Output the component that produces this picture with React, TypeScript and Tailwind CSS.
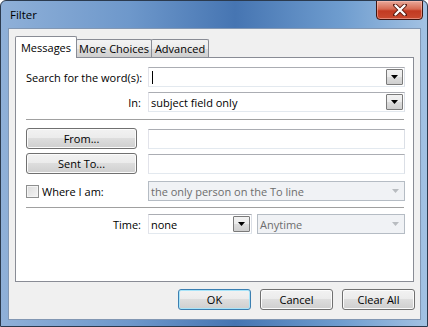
import React from "react";

const FONT = { fontFamily: '"Open Sans", "Noto Sans", sans-serif' };

function Arrow({ disabled }: { disabled?: boolean }) {
  if (disabled) {
    return (
      <div className="w-[17px] self-stretch flex items-center justify-center">
        <svg width="7" height="4" viewBox="0 0 7 4">
          <path d="M0 0 H7 L3.5 4 Z" fill="#b8bcc0" />
        </svg>
      </div>
    );
  }
  return (
    <div className="w-[17px] self-stretch my-[1px] mr-[1px] border border-[#7a7a7a] rounded-[1px] bg-[linear-gradient(180deg,#f2f2f2_0%,#ebebeb_50%,#dddddd_50%,#cfcfcf_100%)] flex items-center justify-center">
      <svg width="7" height="4" viewBox="0 0 7 4">
        <path d="M0 0 H7 L3.5 4 Z" fill="#000" />
      </svg>
    </div>
  );
}

function Combo({
  text,
  disabled,
  caret,
  className = "",
}: {
  text?: string;
  disabled?: boolean;
  caret?: boolean;
  className?: string;
}) {
  return (
    <div
      className={
        "h-[20px] flex items-stretch border " +
        (disabled ? "bg-[#f0f2f5] border-[#b5bcc4] text-[#6d6d6d] " : "bg-white border-[#abadb3] border-b-[#e3e9ef] border-l-[#e2e3ea] border-r-[#dbdfe6] text-black ") +
        className
      }
    >
      <div className="flex-1 flex items-center pl-[2px] text-[11px] leading-none whitespace-nowrap overflow-hidden">
        {caret ? <div className="w-px h-[13px] bg-black ml-[1px]" /> : text}
      </div>
      <Arrow disabled={disabled} />
    </div>
  );
}

function TextBox() {
  return <div className="h-[20px] flex-1 bg-white border border-[#abadb3] border-b-[#e3e9ef] border-l-[#e2e3ea] border-r-[#dbdfe6]" />;
}

function WinButton({ children, def, className = "" }: { children: React.ReactNode; def?: boolean; className?: string }) {
  return (
    <div
      className={
        "h-[21px] rounded-[3px] border flex items-center justify-center text-[11px] text-black leading-none bg-[linear-gradient(180deg,#f2f2f2_0%,#ebebeb_50%,#dddddd_50%,#cfcfcf_100%)] " +
        (def ? "border-[#3c7fb1] shadow-[inset_0_0_0_1px_#a8e4f9] " : "border-[#707070] shadow-[inset_0_0_0_1px_#fbfbfb] ") +
        className
      }
    >
      {children}
    </div>
  );
}

function Label({ children }: { children: React.ReactNode }) {
  return <div className="w-[115px] text-right text-[11px] text-black leading-none whitespace-nowrap">{children}</div>;
}

export default function App() {
  return (
    <div
      className="w-[428px] h-[327px] relative overflow-hidden flex flex-col rounded-t-[6px] border border-[#2b3a4e] bg-[linear-gradient(90deg,#8fb0d8_0%,#6e98cb_30%,#4675b2_55%,#6f9dcf_80%,#a3c2e3_100%)]"
      style={FONT}
    >
      {/* title bar */}
      <div className="h-[27px] flex items-center pl-[9px] shrink-0">
        <span className="text-[11.5px] text-black leading-none">Filter</span>
      </div>
      {/* close button */}
      <div className="absolute top-[-1px] right-[4px] w-[47px] h-[20px] rounded-b-[4px] border border-[#3f1510] bg-[linear-gradient(180deg,#e9a99a_0%,#d66a52_45%,#c23a22_55%,#c94a30_100%)] shadow-[inset_0_0_0_1px_rgba(255,200,190,0.5)] flex items-center justify-center">
        <svg width="14" height="12" viewBox="0 0 14 12">
          <path d="M2 1 L12 11 M12 1 L2 11" stroke="#5a1a10" strokeWidth="4" strokeLinecap="round" />
          <path d="M2.5 1.5 L11.5 10.5 M11.5 1.5 L2.5 10.5" stroke="#ffffff" strokeWidth="2.4" strokeLinecap="round" />
        </svg>
      </div>

      {/* client area */}
      <div className="ml-[7px] mr-[6px] mb-[6px] flex-1 bg-[#f0f0f0] border border-[#8297b3] flex flex-col px-[6px] pt-[7px]">
        {/* tabs */}
        <div className="flex items-end h-[21px] relative z-10">
          <div className="w-[62px] h-[22px] -mb-px bg-white border border-b-0 border-[#898c95] rounded-t-[2px] flex items-center justify-center text-[11px] leading-none text-black pb-[1px]">
            Messages
          </div>
          <div className="w-[76px] h-[18px] -ml-px bg-[linear-gradient(180deg,#f3f3f3_0%,#ebebeb_50%,#dddddd_50%,#cfcfcf_100%)] border border-b-0 border-[#898c95] rounded-t-[2px] flex items-center justify-center text-[11px] leading-none text-black">
            More Choices
          </div>
          <div className="w-[58px] h-[18px] -ml-px bg-[linear-gradient(180deg,#f3f3f3_0%,#ebebeb_50%,#dddddd_50%,#cfcfcf_100%)] border border-b-0 border-[#898c95] rounded-t-[2px] flex items-center justify-center text-[11px] leading-none text-black">
            Advanced
          </div>
        </div>

        {/* panel */}
        <div className="h-[225px] bg-white border border-[#898c95] pl-[10px] pr-[8px] pt-[9px] flex flex-col">
          <div className="flex items-center gap-[7px]">
            <Label>Search for the word(s):</Label>
            <Combo caret className="flex-1" />
          </div>
          <div className="flex items-center gap-[7px] mt-[5px]">
            <Label>In:</Label>
            <Combo text="subject field only" className="flex-1" />
          </div>
          <div className="mt-[7px] h-px bg-[#a0a0a0] w-[378px]" />
          <div className="flex items-center gap-[11px] mt-[8px]">
            <WinButton className="w-[111px]">From...</WinButton>
            <TextBox />
          </div>
          <div className="flex items-center gap-[11px] mt-[4px]">
            <WinButton className="w-[111px]">Sent To...</WinButton>
            <TextBox />
          </div>
          <div className="flex items-center mt-[7px]">
            <div className="w-[122px] flex items-center">
              <div className="w-[13px] h-[13px] border border-[#8e8f8f] bg-[linear-gradient(135deg,#dcdcdc_0%,#f4f4f4_100%)] shadow-[inset_0_0_0_1px_#f4f4f4]" />
              <span className="ml-[3px] text-[11px] leading-none text-black">Where I am:</span>
            </div>
            <Combo disabled text="the only person on the To line" className="flex-1" />
          </div>
          <div className="mt-[6px] h-px bg-[#a0a0a0] w-[378px]" />
          <div className="flex items-center gap-[7px] mt-[6px]">
            <Label>Time:</Label>
            <Combo text="none" className="w-[104px]" />
            <Combo disabled text="Anytime" className="flex-1 ml-[-2px]" />
          </div>
        </div>

        {/* buttons */}
        <div className="flex justify-end gap-[9px] mt-[7px] mr-[-1px]">
          <WinButton def className="w-[73px]">OK</WinButton>
          <WinButton className="w-[73px]">Cancel</WinButton>
          <WinButton className="w-[73px]">Clear All</WinButton>
        </div>
      </div>
    </div>
  );
}
